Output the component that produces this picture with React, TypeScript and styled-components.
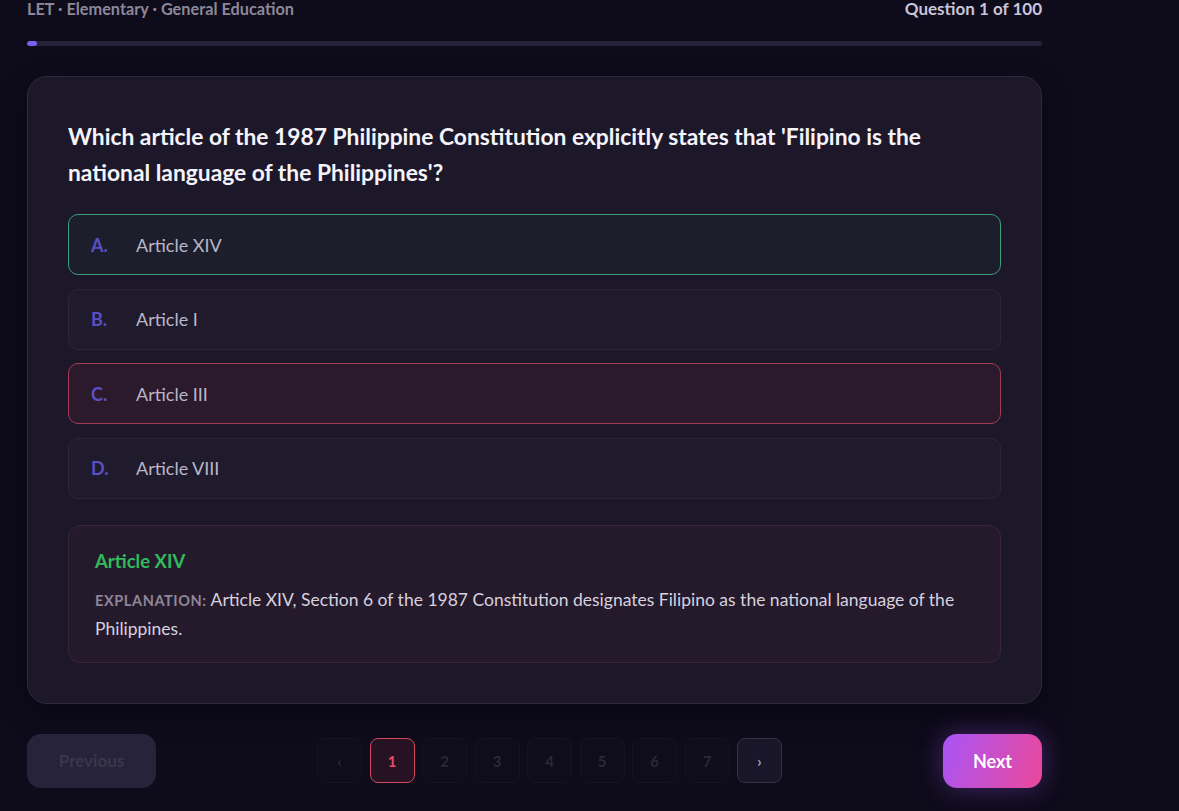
import React from 'react';
import styled, { createGlobalStyle, css } from 'styled-components';

const GlobalStyle = createGlobalStyle`
  html, body {
    margin: 0;
    padding: 0;
    background: #0e0b1b;
  }
  body {
    font-family: Lato, "Open Sans", sans-serif;
    color: #e6e3ef;
  }
`;

type OptionState = 'correct' | 'wrong' | 'idle';

interface OptionItem {
  letter: string;
  text: string;
  state: OptionState;
}

const options: OptionItem[] = [
  { letter: 'A.', text: 'Article XIV', state: 'correct' },
  { letter: 'B.', text: 'Article I', state: 'idle' },
  { letter: 'C.', text: 'Article III', state: 'wrong' },
  { letter: 'D.', text: 'Article VIII', state: 'idle' },
];

const pages = [1, 2, 3, 4, 5, 6, 7];

export default function App() {
  return (
    <>
      <GlobalStyle />
      <Page>
        <Header>
          <Breadcrumb>LET · Elementary · General Education</Breadcrumb>
          <Counter>Question 1 of 100</Counter>
        </Header>
        <ProgressTrack>
          <ProgressFill style={{ width: `${(1 / 100) * 100}%` }} />
        </ProgressTrack>

        <Card>
          <Question>
            Which article of the 1987 Philippine Constitution explicitly states that 'Filipino is the
            national language of the Philippines'?
          </Question>
          <OptionList>
            {options.map((o) => (
              <Option key={o.letter} $state={o.state}>
                <Letter>{o.letter}</Letter>
                <OptionText>{o.text}</OptionText>
              </Option>
            ))}
          </OptionList>
          <Explanation>
            <AnswerTitle>Article XIV</AnswerTitle>
            <ExplanationText>
              <ExplanationLabel>Explanation:</ExplanationLabel> Article XIV, Section 6 of the 1987
              Constitution designates Filipino as the national language of the Philippines.
            </ExplanationText>
          </Explanation>
        </Card>

        <Nav>
          <PrevButton disabled>Previous</PrevButton>
          <Pager>
            <PageButton $variant="faint">‹</PageButton>
            {pages.map((p) => (
              <PageButton key={p} $variant={p === 1 ? 'active' : 'faint'}>
                {p}
              </PageButton>
            ))}
            <PageButton $variant="arrow">›</PageButton>
          </Pager>
          <NextButton>Next</NextButton>
        </Nav>
      </Page>
    </>
  );
}

const Page = styled.div`
  width: 1015px;
  margin-left: 27px;
  padding-bottom: 40px;
`;

const Header = styled.div`
  display: flex;
  justify-content: space-between;
  align-items: center;
  margin-top: -3px;
  height: 22px;
`;

const Breadcrumb = styled.div`
  font-size: 16.3px;
  font-weight: 700;
  color: #8c8899;
`;

const Counter = styled.div`
  font-size: 17px;
  font-weight: 700;
  color: #c9c5d8;
`;

const ProgressTrack = styled.div`
  margin-top: 22px;
  height: 5px;
  border-radius: 3px;
  background: #26223a;
  overflow: hidden;
`;

const ProgressFill = styled.div`
  height: 100%;
  min-width: 10px;
  border-radius: 3px;
  background: #7b61f2;
`;

const Card = styled.div`
  margin-top: 30px;
  padding: 41px 40px 40px;
  border: 1px solid #2f2b3e;
  border-radius: 20px;
  background: #1c1829;
  box-shadow: 0 10px 30px rgba(0, 0, 0, 0.35);
`;

const Question = styled.h2`
  margin: 0 0 24px;
  max-width: 880px;
  font-size: 22.8px;
  font-weight: 700;
  line-height: 36px;
  color: #f5f3fb;
`;

const OptionList = styled.div`
  display: flex;
  flex-direction: column;
  gap: 13.5px;
`;

const optionStyles = {
  correct: css`
    border-color: #3d9c7c;
    background: #1c1f2b;
  `,
  wrong: css`
    border-color: #a53a55;
    background: #2a1a2b;
  `,
  idle: css`
    border-color: #2a2639;
    background: #1f1b2d;
  `,
};

const Option = styled.div<{ $state: OptionState }>`
  display: flex;
  align-items: center;
  height: 61px;
  box-sizing: border-box;
  padding: 0 22px;
  border: 1px solid;
  border-radius: 10px;
  ${(p) => optionStyles[p.$state]}
`;

const Letter = styled.span`
  width: 45px;
  font-size: 18px;
  font-weight: 700;
  color: #5b4fc4;
`;

const OptionText = styled.span`
  font-size: 18px;
  color: #bab5c9;
`;

const Explanation = styled.div`
  margin-top: 26px;
  padding: 24px 26px 19px;
  border: 1px solid #3a2439;
  border-radius: 12px;
  background: #251a2c;
`;

const AnswerTitle = styled.div`
  font-size: 18.5px;
  font-weight: 700;
  color: #2fbb5c;
  margin-bottom: 14px;
`;

const ExplanationText = styled.p`
  margin: 0;
  font-size: 17.5px;
  line-height: 28px;
  color: #d6d1df;
`;

const ExplanationLabel = styled.span`
  font-size: 14.5px;
  font-weight: 700;
  letter-spacing: 0.6px;
  text-transform: uppercase;
  color: #8d8697;
`;

const Nav = styled.div`
  margin-top: 30px;
  display: flex;
  justify-content: space-between;
  align-items: center;
`;

const PrevButton = styled.button`
  width: 129px;
  height: 54px;
  border: none;
  border-radius: 14px;
  background: #27233a;
  font-family: inherit;
  font-size: 17px;
  font-weight: 700;
  color: #3b364d;
`;

const Pager = styled.div`
  display: flex;
  gap: 7.5px;
`;

const pageStyles = {
  active: css`
    border-color: #d24a5e;
    background: #261222;
    color: #e34c62;
  `,
  faint: css`
    border-color: #17141f;
    background: #0f0c1b;
    color: #2b2838;
  `,
  arrow: css`
    border-color: #363246;
    background: #19162a;
    color: #a9a4b8;
  `,
};

const PageButton = styled.button<{ $variant: 'active' | 'faint' | 'arrow' }>`
  width: 45px;
  height: 45px;
  border: 1px solid;
  border-radius: 8px;
  font-family: inherit;
  font-size: 15px;
  font-weight: 700;
  ${(p) => pageStyles[p.$variant]}
`;

const NextButton = styled.button`
  width: 99px;
  height: 54px;
  border: none;
  border-radius: 14px;
  background: linear-gradient(110deg, #a855f7 0%, #ec4899 100%);
  box-shadow: 0 0 26px rgba(168, 85, 247, 0.35);
  font-family: inherit;
  font-size: 18px;
  font-weight: 700;
  color: #fff;
`;
